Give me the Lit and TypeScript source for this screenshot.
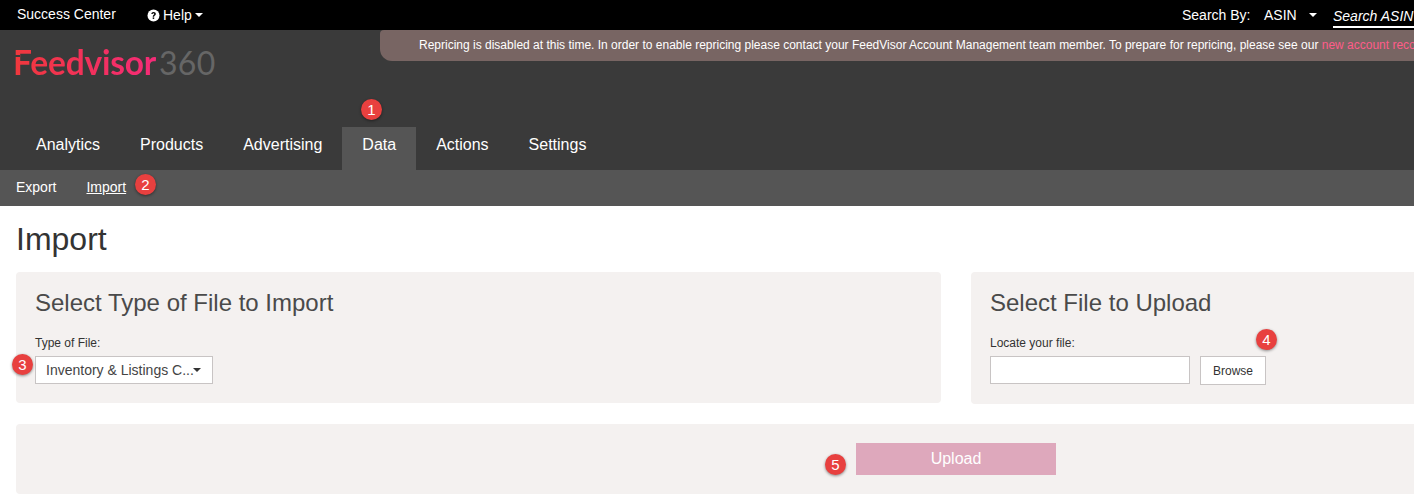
import { LitElement, html, css, svg } from "lit";
import { customElement } from "lit/decorators.js";

@customElement("app-root")
export class AppRoot extends LitElement {
  static styles = css`
    :host { display: block; width: 1414px; height: 495px; overflow: hidden; position: relative; font-family: "Liberation Sans", Arial, sans-serif; color: #333; background: #fff; }
    .top { height: 30px; background: #000; color: #fff; display: flex; align-items: center; font-size: 14px; padding-left: 17px; white-space: nowrap; }
    .top .sc { margin-top: -2px; width: 130px; }
    .help { display: flex; align-items: center; gap: 3px; }
    .help svg { display: block; }
    .caret { display: inline-block; width: 0; height: 0; border-left: 4px solid transparent; border-right: 4px solid transparent; border-top: 4px solid currentColor; }
    .search { margin-left: auto; display: flex; align-items: center; }
    .search .by { width: 82px; }
    .search .asin { width: 45px; }
    .search .caret { margin-right: 16px; }
    .search .box { width: 81px; height: 24px; box-sizing: border-box; border-bottom: 2px solid #fff; font-style: italic; line-height: 24px; overflow: hidden; margin-top: 1px; }
    .head { height: 97px; background: #3a3a3a; display: flex; align-items: flex-start; }
    .logo { width: 380px; flex: none; padding: 15px 0 0 13px; box-sizing: border-box; display: flex; align-items: baseline; font-family: "Lato", sans-serif; font-size: 33.500px; line-height: 34px; white-space: nowrap; position: relative; }
    .logo::after { content: ""; position: absolute; left: 13px; top: 25px; width: 7px; height: 2px; background: #3a3a3a; }
    .fv { font-weight: 700; letter-spacing: -0.2px; background: linear-gradient(90deg, #f0383c, #f52b78); -webkit-background-clip: text; background-clip: text; color: transparent; }
    .n360 { color: #666; margin-left: 3px; font-size: 32px; font-weight: 400; letter-spacing: 0.2px; }
    .banner { flex: 1; min-width: 0; height: 31px; background: #786563; border-bottom-left-radius: 12px; border-top-left-radius: 4px; color: #fff; font-size: 12px; line-height: 30px; padding-left: 39px; white-space: nowrap; overflow: hidden; }
    .banner span { color: #ff5c8a; }
    .nav { height: 43px; background: #3a3a3a; display: flex; padding-left: 16px; font-size: 16px; color: #fff; }
    .nav a { padding: 0 20px; line-height: 35px; height: 43px; position: relative; }
    .nav a.on { background: #555; }
    .sub { height: 36px; background: #555; color: #fff; display: flex; align-items: center; font-size: 14px; padding: 0 0 2px 16px; box-sizing: border-box; gap: 30px; }
    .sub .cur { text-decoration: underline; }
    h1 { margin: 0; padding: 14px 0 0 16px; font-size: 32px; font-weight: 400; line-height: 38px; height: 52px; color: #333; }
    .row { display: flex; gap: 30px; padding-left: 16px; }
    .panel { background: #f4f1f0; border-radius: 4px; padding: 17px 19px 0; box-sizing: border-box; position: relative; }
    .p1 { width: 925px; height: 131px; }
    .p2 { flex: 1; height: 132px; border-radius: 4px 0 0 4px; }
    h2 { margin: 0; font-size: 24px; font-weight: 400; line-height: 28px; color: #4a4a4a; }
    label { display: block; font-size: 12px; line-height: 14px; margin-top: 19px; color: #333; }
    .ctl { display: flex; margin-top: 6px; gap: 10px; align-items: flex-start; }
    .select { width: 178px; height: 28px; box-sizing: border-box; border: 1px solid #c8c4c4; background: #fff; display: flex; align-items: center; padding-left: 10px; font-size: 14px; color: #444; white-space: nowrap; }
    .select .caret { color: #333; margin-left: -1px; }
    .input { width: 200px; height: 28px; box-sizing: border-box; border: 1px solid #c8c4c4; background: #fff; }
    .browse { width: 66px; height: 29px; box-sizing: border-box; border: 1px solid #c8c4c4; background: #fff; display: flex; align-items: center; justify-content: center; font-size: 12px; color: #333; }
    .bottom { margin: 20px 0 0 16px; height: 70px; background: #f4f1f0; border-radius: 4px 0 0 4px; display: flex; padding: 19px 0 0 840px; box-sizing: border-box; }
    .upload { width: 200px; height: 32px; background: #dea8bc; color: #fff; font-size: 16px; display: flex; align-items: center; justify-content: center; flex: none; }
    .badge { position: absolute; width: 21px; height: 21px; border-radius: 50%; background: #e8403f; color: #fff; font-size: 15px; line-height: 21px; text-align: center; box-shadow: 0 1px 3px rgba(0,0,0,.45); }
  `;

  render() {
    const badges: [string, number, number][] = [
      ["1", 361, 99], ["2", 135, 174], ["3", 12, 354], ["4", 1256, 329], ["5", 825, 454],
    ];
    return html`
      <div class="top">
        <span class="sc">Success Center</span>
        <span class="help">
          <svg width="13" height="13" viewBox="0 0 13 13">
            <circle cx="6.5" cy="6.5" r="6" fill="#fff"></circle>
            ${svg`<path d="M4.3 5.1c.1-1.3 1-2 2.3-2 1.3 0 2.2.8 2.2 1.8 0 1.6-1.7 1.5-1.7 2.8H5.700c0-1.800 1.600-1.900 1.600-2.800 0-.4-.3-.7-.8-.7-.5 0-.8.3-.9.9z" fill="#000"></path>
            <rect x="5.700" y="8.400" width="1.500" height="1.500" fill="#000"></rect>`}
          </svg>
          Help<i class="caret"></i>
        </span>
        <div class="search">
          <span class="by">Search By:</span>
          <span class="asin">ASIN</span>
          <i class="caret"></i>
          <span class="box">Search ASIN</span>
        </div>
      </div>
      <div class="head">
        <div class="logo"><span class="fv">Feedvisor</span><span class="n360">360</span></div>
        <div class="banner">Repricing is disabled at this time. In order to enable repricing please contact your FeedVisor Account Management team member. To prepare for repricing, please see our <span>new account recommendations</span></div>
      </div>
      <div class="nav">
        <a>Analytics</a><a>Products</a><a>Advertising</a><a class="on">Data</a><a>Actions</a><a>Settings</a>
      </div>
      <div class="sub"><span>Export</span><span class="cur">Import</span></div>
      <h1>Import</h1>
      <div class="row">
        <div class="panel p1">
          <h2>Select Type of File to Import</h2>
          <label>Type of File:</label>
          <div class="ctl"><div class="select">Inventory &amp; Listings C...<i class="caret"></i></div></div>
        </div>
        <div class="panel p2">
          <h2>Select File to Upload</h2>
          <label>Locate your file:</label>
          <div class="ctl"><div class="input"></div><div class="browse">Browse</div></div>
        </div>
      </div>
      <div class="bottom"><div class="upload">Upload</div></div>
      ${badges.map(([t, x, y]) => html`<div class="badge" style="left:${x}px;top:${y}px">${t}</div>`)}
    `;
  }
}
